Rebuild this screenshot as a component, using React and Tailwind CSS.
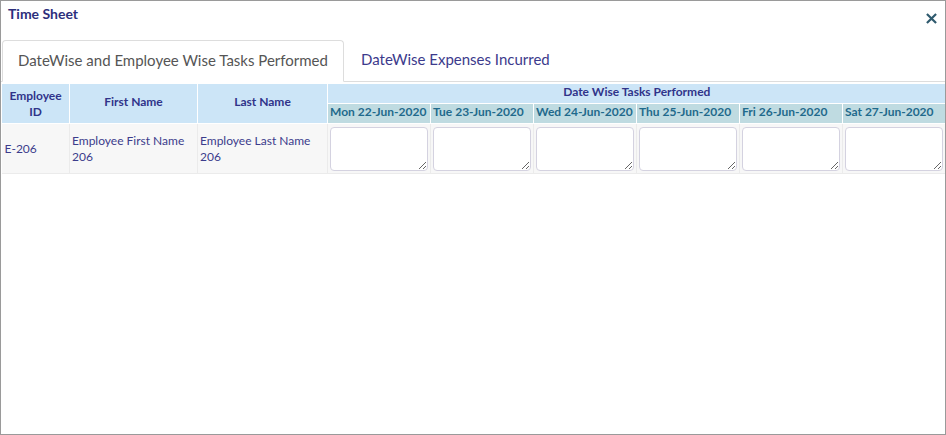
import React from 'react';

const DATES = [
  'Mon 22-Jun-2020',
  'Tue 23-Jun-2020',
  'Wed 24-Jun-2020',
  'Thu 25-Jun-2020',
  'Fri 26-Jun-2020',
  'Sat 27-Jun-2020',
];

export default function App() {
  return (
    <div
      className="w-[946px] h-[435px] border border-[#9a9a9a] bg-white flex flex-col overflow-hidden"
      style={{ fontFamily: 'Lato, "Open Sans", sans-serif' }}
    >
      {/* Header */}
      <div className="flex items-start justify-between h-[39px] pl-[7px] pr-[8px]">
        <div className="text-[14px] font-bold text-[#2d2f7c] mt-[2px]">Time Sheet</div>
        <svg className="mt-[12px]" width="11" height="11" viewBox="0 0 12 12" stroke="#2f5a6e" strokeWidth="2.4" strokeLinecap="butt">
          <path d="M1 1 11 11M11 1 1 11" />
        </svg>
      </div>

      {/* Tabs */}
      <div className="flex h-[42px] border-b border-[#dddddd]">
        <div className="ml-px w-[342px] -mb-px flex items-center justify-center pb-[2px] bg-white border border-[#dddddd] border-b-white rounded-t-[4px] text-[15px] text-[#555555]">
          DateWise and Employee Wise Tasks Performed
        </div>
        <div className="flex items-center pl-[17px] pb-[2px] text-[15px] text-[#3c3a8c]">
          DateWise Expenses Incurred
        </div>
      </div>

      {/* Table */}
      <div className="pt-px">
        <table className="border-collapse table-fixed w-[944px] text-[12px]">
          <colgroup>
            <col className="w-[68px]" />
            <col className="w-[128px]" />
            <col className="w-[130px]" />
            {DATES.map((d) => (
              <col key={d} className="w-[103px]" />
            ))}
          </colgroup>
          <thead>
            <tr className="h-[20px]">
              <th rowSpan={2} className="bg-[#cce5f7] border border-white font-bold text-[#30348a] leading-[16px] py-0 px-1">
                Employee ID
              </th>
              <th rowSpan={2} className="bg-[#cce5f7] border border-white font-bold text-[#30348a] pb-[3px]">
                First Name
              </th>
              <th rowSpan={2} className="bg-[#cce5f7] border border-white font-bold text-[#30348a] pb-[3px]">
                Last Name
              </th>
              <th colSpan={6} className="bg-[#cce5f7] border border-white border-r-0 font-bold text-[#30348a] leading-[14px] pb-[3px]">
                Date Wise Tasks Performed
              </th>
            </tr>
            <tr className="h-[20px]">
              {DATES.map((d) => (
                <th key={d} className="bg-[#bfdbe1] border border-white last:border-r-0 font-bold text-[#1f6a8c] text-left pl-[2px] pb-[3px] whitespace-nowrap leading-[14px]">
                  {d}
                </th>
              ))}
            </tr>
          </thead>
          <tbody>
            <tr className="bg-[#f7f7f7] h-[50px] border-b border-[#ebebeb]">
              <td className="border-r border-[#ebebeb] pl-[3px] text-[#3c3c8c]">E-206</td>
              <td className="border-r border-[#ebebeb] pl-[2px] text-[#3c3c8c] leading-[16px]">Employee First Name 206</td>
              <td className="border-r border-[#ebebeb] pl-[2px] text-[#3c3c8c] leading-[16px]">Employee Last Name 206</td>
              {DATES.map((d) => (
                <td key={d} className="border-r border-[#ebebeb] last:border-r-0 px-[2px] py-0 align-middle">
                  <textarea className="block w-[98px] h-[44px] bg-white border border-[#d4d2e0] rounded-[4px] resize" />
                </td>
              ))}
            </tr>
          </tbody>
        </table>
      </div>
    </div>
  );
}
